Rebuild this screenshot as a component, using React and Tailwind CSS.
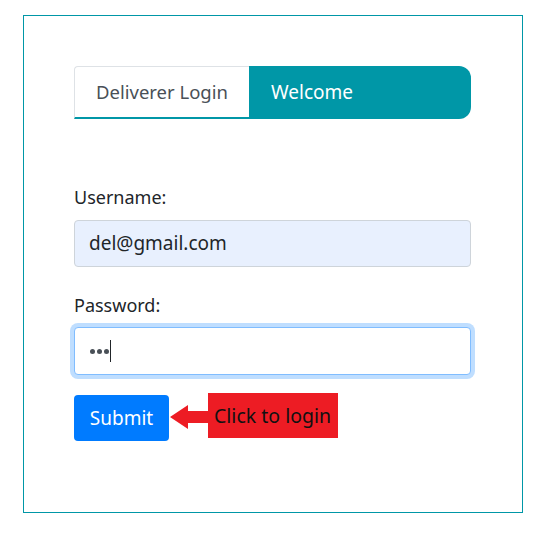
export default function App() {
  return (
    <div className="w-[544px] h-[534px] bg-white pt-[15px] pl-[23px]" style={{ fontFamily: '"Noto Sans", "Open Sans", sans-serif' }}>
      <div className="w-[500px] h-[498px] border border-[#0097a7] pt-[50px] pl-[50px] pr-[50px]">
        <div className="flex h-[53px] w-[397px]">
          <div className="w-[175px] flex items-center pl-[21px] bg-white border-l border-t border-[#dee2e6] border-b-2 border-b-[#0097a7] rounded-tl-[4px] text-[18.5px] text-[#495057]">
            Deliverer Login
          </div>
          <div className="flex-1 flex items-center pl-[22px] bg-[#0097a7] rounded-r-[12px] text-[19px] text-white">
            Welcome
          </div>
        </div>

        <form className="mt-[65px] w-[397px]" onSubmit={e => e.preventDefault()}>
          <label className="block text-[18px] leading-[27px] text-[#212529]">Username:</label>
          <div className="mt-[9px] h-[47px] rounded-[4px] border border-[#ced4da] bg-[#e8f0fe] flex items-center pl-[14px] text-[19px] text-[#212529]">
            del@gmail.com
          </div>

          <label className="block mt-[25px] text-[18px] leading-[27px] text-[#212529]">Password:</label>
          <div className="mt-[8px] h-[48px] rounded-[4px] border border-[#80bdff] ring-4 ring-[#bfdeff] bg-white flex items-center pl-[15px]">
            <span className="flex gap-[2px]">
              <span className="w-[5px] h-[5px] rounded-full bg-[#495057]"></span>
              <span className="w-[5px] h-[5px] rounded-full bg-[#495057]"></span>
              <span className="w-[5px] h-[5px] rounded-full bg-[#495057]"></span>
            </span>
            <span className="ml-[1px] w-px h-[22px] bg-[#212529]"></span>
          </div>

          <div className="mt-[20px] flex items-start">
            <button type="submit" className="w-[95px] h-[46px] rounded-[4px] bg-[#007bff] text-white text-[19px]">
              Submit
            </button>
            <svg width="38" height="24" viewBox="0 0 38 24" className="mt-[10px] ml-[1px]">
              <polygon points="0,12 18,0 18,6 38,6 38,18 18,18 18,24" fill="#ed1c24" />
            </svg>
            <div className="-mt-[2px] w-[130px] h-[45px] bg-[#ed1c24] flex items-center pl-[6px] text-[19.5px] text-[#111]">
              Click to login
            </div>
          </div>
        </form>
      </div>
    </div>
  );
}
